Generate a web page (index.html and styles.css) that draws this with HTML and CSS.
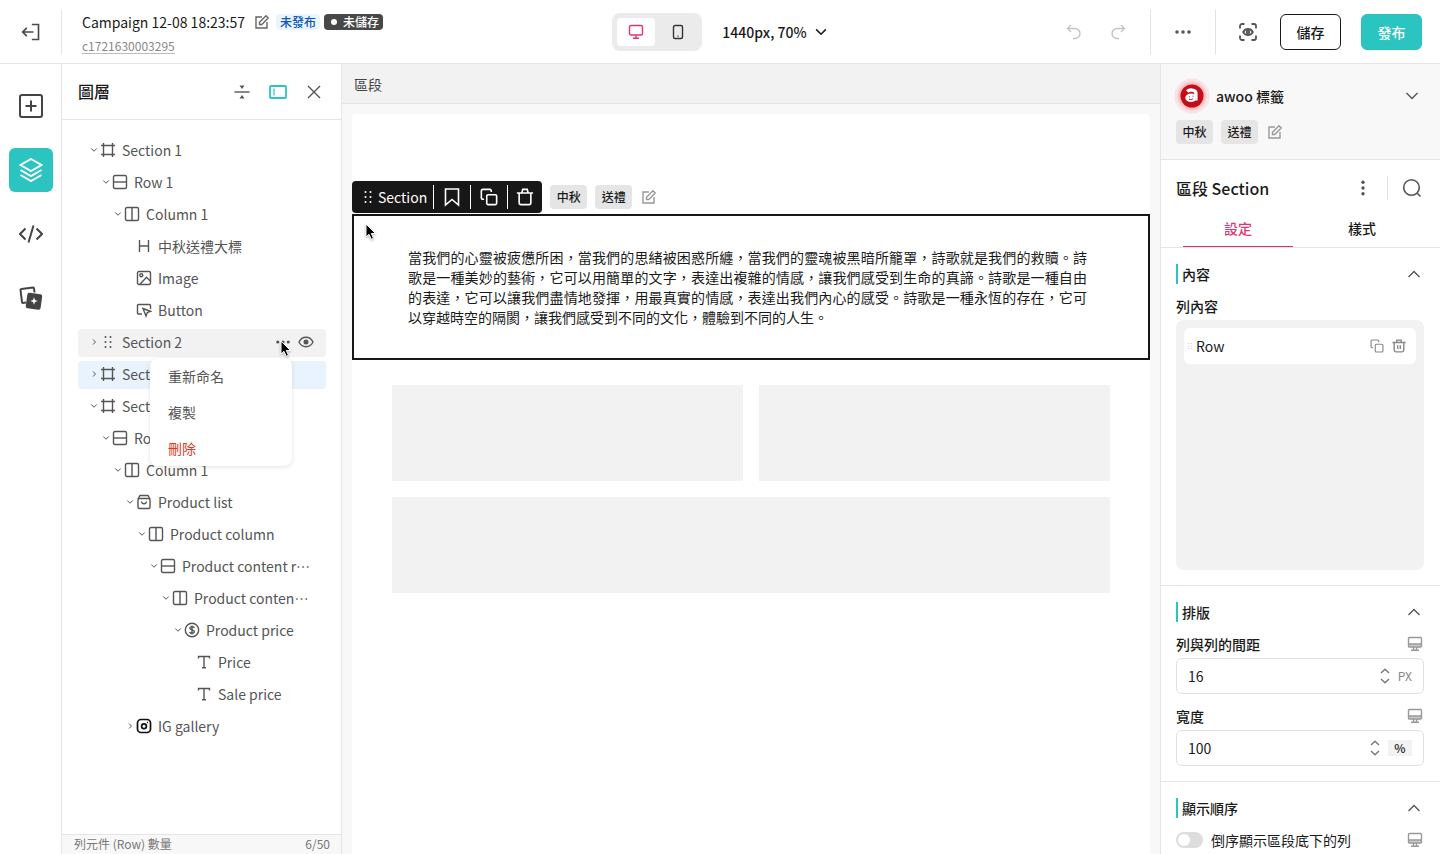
FILE: index.html
```html
<!DOCTYPE html>
<html lang="zh-Hant">
<head>
    <meta charset="UTF-8">
    <meta name="viewport" content="width=device-width, initial-scale=1.0">
    <title>Campaign 12-08 18:23:57</title>
    <link rel="stylesheet" href="styles.css">
</head>
<body>

    <!-- Icon set -->
    <svg class="sprite" aria-hidden="true">
        <symbol id="i-exit" viewBox="0 0 24 24"><path d="M13 3h8v18h-8M2 12h13M7 7l-5 5 5 5"/></symbol>
        <symbol id="i-edit" viewBox="0 0 16 16"><path d="M8 3H2v11h11V8M5.500 10.500V8.200L12 1.800l2.200 2.200-6.400 6.500z"/></symbol>
        <symbol id="i-desktop" viewBox="0 0 16 16"><rect x="1.500" y="1.500" width="13" height="9.500" rx="1.500"/><path d="M8 11v3M5 14.300h6"/></symbol>
        <symbol id="i-phone" viewBox="0 0 16 16"><rect x="3.500" y="1.500" width="9" height="13" rx="1.500"/><path d="M8 11.500v1"/></symbol>
        <symbol id="i-down" viewBox="0 0 16 16"><path d="M2.500 5l5.500 5.500L13.500 5"/></symbol>
        <symbol id="i-up" viewBox="0 0 16 16"><path d="M2.500 11L8 5.500l5.500 5.500"/></symbol>
        <symbol id="i-right" viewBox="0 0 16 16"><path d="M6 3l5 5-5 5"/></symbol>
        <symbol id="i-undo" viewBox="0 0 16 16"><path d="M5 1L1.500 4.500 5 8M1.500 4.500H9a5 5 0 0 1 0 10H7"/></symbol>
        <symbol id="i-redo" viewBox="0 0 16 16"><path d="M11 1l3.500 3.500L11 8M14.500 4.500H7a5 5 0 0 0 0 10h2"/></symbol>
        <symbol id="i-more" viewBox="0 0 16 16"><g fill="currentColor" stroke="none"><circle cx="2" cy="8" r="1.800"/><circle cx="8" cy="8" r="1.800"/><circle cx="14" cy="8" r="1.800"/></g></symbol>
        <symbol id="i-more-v" viewBox="0 0 16 16"><g fill="currentColor" stroke="none"><circle cx="8" cy="2.200" r="1.700"/><circle cx="8" cy="8" r="1.700"/><circle cx="8" cy="13.800" r="1.700"/></g></symbol>
        <symbol id="i-preview" viewBox="0 0 18 18"><path d="M1 5.500V3a2 2 0 0 1 2-2h2.500M12.500 1H15a2 2 0 0 1 2 2v2.500M17 12.500V15a2 2 0 0 1-2 2h-2.500M5.500 17H3a2 2 0 0 1-2-2v-2.500"/><path d="M4.200 9c2-4 7.600-4 9.600 0-2 4-7.600 4-9.600 0z"/><circle cx="9" cy="9" r="1.300"/></symbol>
        <symbol id="i-add" viewBox="0 0 24 24"><rect x="1" y="1" width="22" height="22" rx="2"/><path d="M12 6.500v11M6.500 12h11"/></symbol>
        <symbol id="i-layers" viewBox="0 0 24 24"><path d="M12 1l10.500 6L12 13 1.500 7zM1.500 12L12 18l10.500-6M1.500 17L12 23l10.500-6"/></symbol>
        <symbol id="i-code" viewBox="0 0 24 24"><path d="M6.500 6.500L1 12l5.500 5.500M17.500 6.500L23 12l-5.500 5.500M14.500 3.500l-5 17"/></symbol>
        <symbol id="i-cards" viewBox="0 0 24 24"><path d="M7 16.500l-3 .5a1 1 0 0 1-1-1L1.500 4a1 1 0 0 1 1-1L14 1.500a1 1 0 0 1 1 1l.5 4"/><rect x="7.500" y="7.500" width="15" height="15.500" rx="2" fill="currentColor" stroke="none" transform="rotate(8 15 15)"/><path d="M15 11.300l1 2.700 2.700 1-2.700 1-1 2.700-1-2.700-2.700-1 2.700-1z" fill="#fff" stroke="none"/></symbol>
        <symbol id="i-collapse" viewBox="0 0 16 16"><path d="M.5 8h15"/><path d="M5.500 1.500h5L8 5zM5.500 14.500h5L8 11z" fill="currentColor" stroke="none"/></symbol>
        <symbol id="i-dock" viewBox="0 0 18 16"><rect x="1" y="2" width="16" height="12" rx="1"/><path d="M5 4.500v7" stroke-width="1.200"/></symbol>
        <symbol id="i-close" viewBox="0 0 16 16"><path d="M2 2l12 12M14 2L2 14"/></symbol>
        <symbol id="i-section" viewBox="0 0 16 16"><path d="M3.500 1v14M12.500 1v14M1 3.500h14M1 12.500h14"/></symbol>
        <symbol id="i-row" viewBox="0 0 16 16"><rect x="1.500" y="1.500" width="13" height="13" rx="1.500"/><path d="M1.500 8h13"/></symbol>
        <symbol id="i-column" viewBox="0 0 16 16"><rect x="1.500" y="1.500" width="13" height="13" rx="1.500"/><path d="M8 1.500v13"/></symbol>
        <symbol id="i-heading" viewBox="0 0 16 16"><path d="M3.500 2v12M12.500 2v12M3.500 8h9"/></symbol>
        <symbol id="i-image" viewBox="0 0 16 16"><rect x="1.500" y="1.500" width="13" height="13" rx="1.500"/><circle cx="5.300" cy="5.300" r="1.500"/><path d="M4 14.300l6.500-7 4 4"/></symbol>
        <symbol id="i-button" viewBox="0 0 16 16"><path d="M6 12H2.500a1 1 0 0 1-1-1V3.500a1 1 0 0 1 1-1h11a1 1 0 0 1 1 1V7"/><path d="M7 6.500l7.500 2.800-3.200 1.200L10 14z"/></symbol>
        <symbol id="i-grip" viewBox="0 0 16 16"><g fill="currentColor" stroke="none"><circle cx="5.500" cy="3" r="1"/><circle cx="10.500" cy="3" r="1"/><circle cx="5.500" cy="8" r="1"/><circle cx="10.500" cy="8" r="1"/><circle cx="5.500" cy="13" r="1"/><circle cx="10.500" cy="13" r="1"/></g></symbol>
        <symbol id="i-eye" viewBox="0 0 16 16"><path d="M1 8c3-6.300 11-6.300 14 0-3 6.300-11 6.300-14 0z"/><circle cx="8" cy="8" r="1.800" fill="currentColor"/></symbol>
        <symbol id="i-bag" viewBox="0 0 16 16"><rect x="2" y="4.500" width="12" height="10" rx="1.500"/><path d="M2 5l2-3.500h8L14 5M5.500 7.500c.5 3 4.500 3 5 0"/></symbol>
        <symbol id="i-price" viewBox="0 0 16 16"><circle cx="8" cy="8" r="6.700"/><path d="M10.400 5.800C9.500 4.300 5.800 4.400 5.800 6.300c0 2 4.600 1.300 4.600 3.400 0 2-3.900 2-4.800.4M8 3.500v9"/></symbol>
        <symbol id="i-text" viewBox="0 0 16 16"><path d="M2.500 4.500V2.500h11v2M8 2.500v11.200M6 13.700h4"/></symbol>
        <symbol id="i-gallery" viewBox="0 0 16 16"><rect x="1.500" y="1.500" width="13" height="13" rx="3.500"/><circle cx="8" cy="8.300" r="2.400"/><path d="M11 4.500h1"/></symbol>
        <symbol id="i-bookmark" viewBox="0 0 20 20"><path d="M3.500 2h13v16L10 12.500 3.500 18z"/></symbol>
        <symbol id="i-copy" viewBox="0 0 20 20"><rect x="7.500" y="7.500" width="11" height="11" rx="1.500"/><path d="M4.500 12.500H3A1.500 1.500 0 0 1 1.500 11V3A1.500 1.500 0 0 1 3 1.500h8A1.500 1.500 0 0 1 12.500 3v1.500"/></symbol>
        <symbol id="i-trash" viewBox="0 0 20 20"><path d="M1 5.500h18M3.500 5.500v11a2 2 0 0 0 2 2h9a2 2 0 0 0 2-2v-11M6.500 5.500l1-4h5l1 4"/></symbol>
        <symbol id="i-bin" viewBox="0 0 16 16"><path d="M.5 4h15M2.500 4v8.700a2 2 0 0 0 2 2h7a2 2 0 0 0 2-2V4M5.500 4V1.300h5V4M6.500 7v4.500M9.500 7v4.500"/></symbol>
        <symbol id="i-search" viewBox="0 0 20 20"><circle cx="9.500" cy="9.500" r="7.800"/><path d="M15 15l3.500 3.500"/></symbol>
        <symbol id="i-device" viewBox="0 0 16 16"><path d="M1.500 8h13v3h-13z" fill="#ccc" stroke="none"/><rect x="1.500" y="1.500" width="13" height="9.500" rx="1"/><path d="M1.500 8h13M6.500 11v3M9.500 11v3M4 14.200h8"/></symbol>
        <symbol id="i-stepper" viewBox="0 0 10 16"><path d="M1 5l4-3.800L9 5M1 11l4 3.800L9 11"/></symbol>
        <symbol id="i-cursor" viewBox="0 0 14 18"><path d="M2 1v13l3-2.700 2.200 5 2.300-1-2.200-4.800h4.200z" fill="#000" stroke="#fff" stroke-width="1"/></symbol>
    </svg>

    <header class="topbar">
        <div class="topbar-left">
            <button class="exit" aria-label="離開"><svg class="icon icon-24"><use href="#i-exit"/></svg></button>
            <div class="campaign">
                <div class="campaign-name">
                    <h1>Campaign 12-08 18:23:57</h1>
                    <button class="edit-btn" aria-label="編輯名稱"><svg class="icon"><use href="#i-edit"/></svg></button>
                    <span class="status status-draft">未發布</span>
                    <span class="status status-unsaved">未儲存</span>
                </div>
                <a class="campaign-id" href="#">c1721630003295</a>
            </div>
        </div>

        <div class="viewport">
            <div class="device-toggle">
                <button class="active" aria-label="桌機"><svg class="icon"><use href="#i-desktop"/></svg></button>
                <button aria-label="手機"><svg class="icon"><use href="#i-phone"/></svg></button>
            </div>
            <button class="zoom">1440px, 70%<svg class="icon icon-14"><use href="#i-down"/></svg></button>
        </div>

        <div class="topbar-actions">
            <button class="icon-btn disabled" aria-label="復原"><svg class="icon"><use href="#i-undo"/></svg></button>
            <button class="icon-btn disabled" aria-label="重做"><svg class="icon"><use href="#i-redo"/></svg></button>
            <span class="divider"></span>
            <button class="icon-btn" aria-label="更多"><svg class="icon"><use href="#i-more"/></svg></button>
            <span class="divider"></span>
            <button class="icon-btn" aria-label="預覽"><svg class="icon icon-18"><use href="#i-preview"/></svg></button>
            <button class="btn">儲存</button>
            <button class="btn btn-primary">發布</button>
        </div>
    </header>

    <main class="editor">
        <nav class="rail">
            <button aria-label="新增"><svg class="icon icon-24"><use href="#i-add"/></svg></button>
            <button class="active" aria-label="圖層"><svg class="icon icon-24"><use href="#i-layers"/></svg></button>
            <button aria-label="程式碼"><svg class="icon icon-24"><use href="#i-code"/></svg></button>
            <button aria-label="範本"><svg class="icon icon-24"><use href="#i-cards"/></svg></button>
        </nav>

        <aside class="layers">
            <div class="layers-head">
                <h2>圖層</h2>
                <button aria-label="全部收合"><svg class="icon"><use href="#i-collapse"/></svg></button>
                <button class="teal" aria-label="固定面板"><svg class="icon icon-18"><use href="#i-dock"/></svg></button>
                <button aria-label="關閉"><svg class="icon"><use href="#i-close"/></svg></button>
            </div>

            <ul class="tree">
                <li>
                    <div class="node"><svg class="icon caret"><use href="#i-down"/></svg><svg class="icon"><use href="#i-section"/></svg><span>Section 1</span></div>
                    <ul>
                        <li>
                            <div class="node"><svg class="icon caret"><use href="#i-down"/></svg><svg class="icon"><use href="#i-row"/></svg><span>Row 1</span></div>
                            <ul>
                                <li>
                                    <div class="node"><svg class="icon caret"><use href="#i-down"/></svg><svg class="icon"><use href="#i-column"/></svg><span>Column 1</span></div>
                                    <ul>
                                        <li><div class="node leaf"><svg class="icon"><use href="#i-heading"/></svg><span>中秋送禮大標</span></div></li>
                                        <li><div class="node leaf"><svg class="icon"><use href="#i-image"/></svg><span>Image</span></div></li>
                                        <li><div class="node leaf"><svg class="icon"><use href="#i-button"/></svg><span>Button</span></div></li>
                                    </ul>
                                </li>
                            </ul>
                        </li>
                    </ul>
                </li>
                <li class="has-menu">
                    <div class="node hover">
                        <svg class="icon caret"><use href="#i-right"/></svg><svg class="icon icon-grip"><use href="#i-grip"/></svg><span>Section 2</span>
                        <button aria-label="更多"><svg class="icon icon-14"><use href="#i-more"/></svg></button>
                        <button aria-label="顯示"><svg class="icon"><use href="#i-eye"/></svg></button>
                    </div>
                    <div class="menu">
                        <button>重新命名</button>
                        <button>複製</button>
                        <button class="danger">刪除</button>
                    </div>
                    <svg class="icon cursor"><use href="#i-cursor"/></svg>
                </li>
                <li><div class="node selected"><svg class="icon caret"><use href="#i-right"/></svg><svg class="icon"><use href="#i-section"/></svg><span>Section 3</span></div></li>
                <li>
                    <div class="node"><svg class="icon caret"><use href="#i-down"/></svg><svg class="icon"><use href="#i-section"/></svg><span>Section 4</span></div>
                    <ul>
                        <li>
                            <div class="node"><svg class="icon caret"><use href="#i-down"/></svg><svg class="icon"><use href="#i-row"/></svg><span>Row 1</span></div>
                            <ul>
                                <li>
                                    <div class="node"><svg class="icon caret"><use href="#i-down"/></svg><svg class="icon"><use href="#i-column"/></svg><span>Column 1</span></div>
                                    <ul>
                                        <li>
                                            <div class="node"><svg class="icon caret"><use href="#i-down"/></svg><svg class="icon"><use href="#i-bag"/></svg><span>Product list</span></div>
                                            <ul>
                                                <li>
                                                    <div class="node"><svg class="icon caret"><use href="#i-down"/></svg><svg class="icon"><use href="#i-column"/></svg><span>Product column</span></div>
                                                    <ul>
                                                        <li>
                                                            <div class="node"><svg class="icon caret"><use href="#i-down"/></svg><svg class="icon"><use href="#i-row"/></svg><span>Product content row</span></div>
                                                            <ul>
                                                                <li>
                                                                    <div class="node"><svg class="icon caret"><use href="#i-down"/></svg><svg class="icon"><use href="#i-column"/></svg><span>Product content column</span></div>
                                                                    <ul>
                                                                        <li>
                                                                            <div class="node"><svg class="icon caret"><use href="#i-down"/></svg><svg class="icon"><use href="#i-price"/></svg><span>Product price</span></div>
                                                                            <ul>
                                                                                <li><div class="node leaf"><svg class="icon"><use href="#i-text"/></svg><span>Price</span></div></li>
                                                                                <li><div class="node leaf"><svg class="icon"><use href="#i-text"/></svg><span>Sale price</span></div></li>
                                                                            </ul>
                                                                        </li>
                                                                    </ul>
                                                                </li>
                                                            </ul>
                                                        </li>
                                                    </ul>
                                                </li>
                                            </ul>
                                        </li>
                                        <li><div class="node"><svg class="icon caret"><use href="#i-right"/></svg><svg class="icon icon-dark"><use href="#i-gallery"/></svg><span>IG gallery</span></div></li>
                                    </ul>
                                </li>
                            </ul>
                        </li>
                    </ul>
                </li>
            </ul>

            <div class="layers-foot"><span>列元件 (Row) 數量</span><span>6/50</span></div>
        </aside>

        <section class="canvas">
            <div class="breadcrumb">區段</div>
            <div class="stage">
                <div class="block-bar">
                    <div class="block-tools">
                        <svg class="icon icon-grip"><use href="#i-grip"/></svg>
                        <span>Section</span>
                        <button aria-label="收藏"><svg class="icon icon-20"><use href="#i-bookmark"/></svg></button>
                        <button aria-label="複製"><svg class="icon icon-18"><use href="#i-copy"/></svg></button>
                        <button aria-label="刪除"><svg class="icon icon-18"><use href="#i-trash"/></svg></button>
                    </div>
                    <div class="tags">
                        <span class="tag">中秋</span>
                        <span class="tag">送禮</span>
                        <button class="edit-btn" aria-label="編輯標籤"><svg class="icon"><use href="#i-edit"/></svg></button>
                    </div>
                </div>
                <div class="block-selected">
                    <p>當我們的心靈被疲憊所困，當我們的思緒被困惑所纏，當我們的靈魂被黑暗所籠罩，詩歌就是我們的救贖。詩歌是一種美妙的藝術，它可以用簡單的文字，表達出複雜的情感，讓我們感受到生命的真諦。詩歌是一種自由的表達，它可以讓我們盡情地發揮，用最真實的情感，表達出我們內心的感受。詩歌是一種永恆的存在，它可以穿越時空的隔閡，讓我們感受到不同的文化，體驗到不同的人生。</p>
                    <svg class="icon cursor"><use href="#i-cursor"/></svg>
                </div>
                <div class="placeholder-grid">
                    <div></div>
                    <div></div>
                    <div class="wide"></div>
                </div>
            </div>
        </section>

        <aside class="settings">
            <div class="awoo">
                <div class="awoo-head">
                    <svg class="awoo-logo" viewBox="0 0 36 36">
                        <defs>
                            <radialGradient id="glow">
                                <stop offset="0.6" stop-color="#f4a3aa"/>
                                <stop offset="1" stop-color="#fdf3f4"/>
                            </radialGradient>
                        </defs>
                        <circle cx="18" cy="18" r="17" fill="url(#glow)" stroke="#f5dfe1"/>
                        <circle cx="18" cy="18" r="11.500" fill="#c50d18"/>
                        <path d="M13.200 13.500c2-2 8.200-2.200 8.700 1.500v7.500" fill="none" stroke="#fff" stroke-width="3.400"/>
                        <ellipse cx="17" cy="19.800" rx="5.700" ry="4.300" fill="#fff"/>
                        <path d="M14.800 18.800h1M18.500 18.200h1M15 21c1.500 1 3 .8 4-.5" fill="none" stroke="#c50d18" stroke-width="1"/>
                    </svg>
                    <strong>awoo 標籤</strong>
                    <button aria-label="展開"><svg class="icon"><use href="#i-down"/></svg></button>
                </div>
                <div class="tags">
                    <span class="tag">中秋</span>
                    <span class="tag">送禮</span>
                    <button class="edit-btn" aria-label="編輯標籤"><svg class="icon"><use href="#i-edit"/></svg></button>
                </div>
            </div>

            <div class="settings-head">
                <h2>區段 Section</h2>
                <button aria-label="更多"><svg class="icon"><use href="#i-more-v"/></svg></button>
                <span class="divider"></span>
                <button aria-label="搜尋"><svg class="icon icon-20"><use href="#i-search"/></svg></button>
            </div>
            <div class="tabs">
                <button class="active">設定</button>
                <button>樣式</button>
            </div>

            <section class="group">
                <div class="group-title"><h3>內容</h3><button aria-label="收合"><svg class="icon"><use href="#i-up"/></svg></button></div>
                <h4>列內容</h4>
                <div class="row-list">
                    <div class="row-item">
                        <svg class="icon row-grip"><use href="#i-grip"/></svg>
                        <span>Row</span>
                        <button aria-label="複製"><svg class="icon icon-14"><use href="#i-copy"/></svg></button>
                        <button aria-label="刪除"><svg class="icon icon-14"><use href="#i-bin"/></svg></button>
                    </div>
                </div>
            </section>

            <section class="group">
                <div class="group-title"><h3>排版</h3><button aria-label="收合"><svg class="icon"><use href="#i-up"/></svg></button></div>
                <div class="field">
                    <div class="field-label"><label for="gap">列與列的間距</label><svg class="icon"><use href="#i-device"/></svg></div>
                    <div class="number">
                        <input type="number" id="gap" value="16">
                        <svg class="icon stepper"><use href="#i-stepper"/></svg>
                        <span class="unit">PX</span>
                    </div>
                </div>
                <div class="field">
                    <div class="field-label"><label for="width">寬度</label><svg class="icon"><use href="#i-device"/></svg></div>
                    <div class="number">
                        <input type="number" id="width" value="100">
                        <svg class="icon stepper"><use href="#i-stepper"/></svg>
                        <button class="unit-btn">%</button>
                    </div>
                </div>
            </section>

            <section class="group">
                <div class="group-title"><h3>顯示順序</h3><button aria-label="收合"><svg class="icon"><use href="#i-up"/></svg></button></div>
                <div class="switch-row">
                    <input type="checkbox" class="switch" id="reverse">
                    <label for="reverse">倒序顯示區段底下的列</label>
                    <svg class="icon"><use href="#i-device"/></svg>
                </div>
            </section>
        </aside>
    </main>

</body>
</html>
```
FILE: styles.css
```css
* {
    box-sizing: border-box;
}

body {
    margin: 0;
    height: 100vh;
    display: flex;
    flex-direction: column;
    overflow: hidden;
    background: #fff;
    color: #1a1a1a;
    font-family: "Noto Sans CJK TC", "Noto Sans", sans-serif;
    font-size: 14px;
    line-height: 20px;
}

h1, h2, h3, h4, p, ul {
    margin: 0;
    padding: 0;
}

h1, h4 {
    font-size: 14px;
    font-weight: 400;
}

h2 {
    font-size: 16px;
    font-weight: 500;
    line-height: 24px;
}

h3 {
    font-size: 14px;
    font-weight: 500;
}

ul {
    list-style: none;
}

button {
    display: flex;
    align-items: center;
    justify-content: center;
    margin: 0;
    padding: 0;
    border: 0;
    background: none;
    color: inherit;
    font: inherit;
    cursor: pointer;
}

/* Icons */
.sprite {
    position: absolute;
    width: 0;
    height: 0;
}

.icon {
    display: block;
    flex: none;
    width: 16px;
    height: 16px;
    fill: none;
    stroke: currentColor;
    stroke-width: 1.4;
}

.icon-14 {
    width: 14px;
    height: 14px;
    stroke-width: 1.6;
}

.icon-18 {
    width: 18px;
    height: 18px;
    stroke-width: 1.8;
}

.icon-20 {
    width: 20px;
    height: 20px;
    stroke-width: 1.6;
}

.icon-24 {
    width: 24px;
    height: 24px;
    stroke-width: 2;
}

.icon-dark {
    color: #111;
    stroke-width: 1.7;
}

.cursor {
    position: absolute;
    width: 14px;
    height: 18px;
    filter: drop-shadow(0 1px 1px rgba(0, 0, 0, 0.3));
}

.divider {
    width: 1px;
    height: 24px;
    background: #e2e2e2;
}

/* Top bar */
.topbar {
    display: grid;
    grid-template-columns: 1fr auto 1fr;
    align-items: center;
    flex: none;
    height: 64px;
    border-bottom: 1px solid #e5e5e5;
}

.topbar-left {
    display: flex;
    align-items: center;
    gap: 20px;
}

.exit {
    width: 62px;
    height: 44px;
    border-right: 1px solid #e5e5e5;
    color: #4a4a4a;
}

.exit .icon {
    width: 20px;
    height: 20px;
}

.campaign-name {
    display: flex;
    align-items: center;
    height: 24px;
    margin-bottom: 2px;
    white-space: nowrap;
}

.edit-btn {
    margin: 0 6px 0 9px;
    color: #999;
}

.campaign .edit-btn {
    color: #666;
}

.campaign-id {
    display: block;
    width: fit-content;
    height: 18px;
    border-bottom: 1px solid #bbb;
    color: #888;
    font-size: 12px;
    line-height: 20px;
    text-decoration: none;
}

.status {
    padding: 0 4px;
    border-radius: 4px;
    font-size: 12px;
    font-weight: 500;
    line-height: 16px;
}

.status-draft {
    background: #ebf4ff;
    color: #0958b3;
}

.status-unsaved {
    display: flex;
    align-items: center;
    gap: 6px;
    margin-left: 4px;
    padding-left: 7px;
    background: #484848;
    color: #fff;
}

.status-unsaved::before {
    content: "";
    width: 6px;
    height: 6px;
    border-radius: 50%;
    background: #fff;
}

.viewport {
    display: flex;
    align-items: center;
    gap: 20px;
}

.device-toggle {
    display: flex;
    gap: 4px;
    padding: 5px;
    border-radius: 8px;
    background: #ebebeb;
}

.device-toggle button {
    width: 38px;
    height: 28px;
    border-radius: 4px;
    color: #333;
}

.device-toggle .active {
    background: #fff;
    color: #e0356f;
}

.zoom {
    gap: 7px;
    font-weight: 500;
}

.zoom .icon {
    stroke-width: 1.8;
}

.topbar-actions {
    display: flex;
    align-items: center;
    justify-content: flex-end;
    gap: 20px;
    padding-right: 18px;
}

.topbar-actions .divider {
    height: 44px;
}

.icon-btn {
    width: 24px;
    height: 24px;
    color: #555;
}

.icon-btn.disabled {
    color: #c4c4c4;
}

.btn {
    width: 61px;
    height: 36px;
    border: 1px solid #1a1a1a;
    border-radius: 6px;
    font-weight: 500;
}

.btn-primary {
    border-color: #2bc4c1;
    background: #2bc4c1;
    color: #fff;
}

/* Editor columns */
.editor {
    display: flex;
    flex: 1;
    min-height: 0;
}

.rail {
    display: flex;
    flex-direction: column;
    align-items: center;
    gap: 20px;
    flex: none;
    width: 62px;
    padding-top: 20px;
    border-right: 1px solid #e5e5e5;
}

.rail button {
    width: 44px;
    height: 44px;
    border-radius: 6px;
    color: #444;
}

.rail .active {
    background: #2bc4c1;
    color: #fff;
}

/* Layers panel */
.layers {
    display: flex;
    flex-direction: column;
    flex: none;
    width: 280px;
    border-right: 1px solid #e5e5e5;
}

.layers-head {
    display: flex;
    align-items: center;
    gap: 12px;
    height: 56px;
    padding: 0 15px 0 16px;
    border-bottom: 1px solid #e5e5e5;
}

.layers-head h2 {
    flex: 1;
    padding-bottom: 2px;
}

.layers-head button {
    width: 24px;
    height: 24px;
    color: #555;
}

.layers-head .teal {
    color: #2bc4c1;
}

.tree {
    flex: 1;
    padding: 17px 15px 0 16px;
    color: #555;
}

.tree ul {
    padding-left: 12px;
}

.node {
    display: flex;
    align-items: center;
    height: 28px;
    margin-bottom: 4px;
    padding: 0 14px 2px 10px;
    border-radius: 4px;
}

.node span {
    flex: 1;
    margin-left: 6px;
    overflow: hidden;
    text-overflow: ellipsis;
    white-space: nowrap;
}

.node.leaf {
    padding-left: 22px;
}

.node.hover {
    padding-right: 12px;
    background: #f2f2f2;
}

.node.selected {
    background: #e8f3fe;
}

.node button {
    margin-left: 8px;
}

.caret {
    width: 8px;
    height: 8px;
    margin: 0 2px;
    stroke-width: 2;
}

.has-menu {
    position: relative;
}

.has-menu .cursor {
    top: 11px;
    left: 201px;
    z-index: 3;
}

.menu {
    position: absolute;
    top: 29px;
    left: 72px;
    z-index: 2;
    width: 142px;
    border-radius: 8px;
    background: #fff;
    box-shadow: 0 1px 4px rgba(0, 0, 0, 0.12);
}

.menu button {
    justify-content: flex-start;
    width: 100%;
    height: 36px;
    padding: 0 18px;
}

.menu .danger {
    color: #dc3a26;
}

.layers-foot {
    display: flex;
    justify-content: space-between;
    padding: 0 11px 2px 12px;
    border-top: 1px solid #e5e5e5;
    background: #f8f8f8;
    color: #777;
    font-size: 12px;
    line-height: 17px;
}

/* Canvas */
.canvas {
    display: flex;
    flex-direction: column;
    flex: 1;
    min-width: 0;
    background: #f8f8f8;
}

.breadcrumb {
    height: 40px;
    padding: 0 12px;
    border-bottom: 1px solid #e5e5e5;
    background: #f2f2f2;
    color: #444;
    line-height: 40px;
}

.stage {
    flex: 1;
    margin: 10px 10px 0;
    padding-top: 67px;
    border-radius: 4px 4px 0 0;
    background: #fff;
}

.block-bar {
    display: flex;
    align-items: center;
    gap: 8px;
    margin-bottom: 1px;
}

.block-tools {
    display: flex;
    align-items: center;
    height: 32px;
    padding-left: 8px;
    border-radius: 4px;
    background: #171717;
    color: #fff;
}

.block-tools span {
    margin: 0 6px 0 2px;
}

.block-tools button {
    width: 37px;
    height: 24px;
    border-left: 1px solid #fff;
}

.block-tools button:last-child {
    width: 35px;
}

.tags {
    display: flex;
    align-items: center;
    gap: 8px;
}

.tag {
    min-width: 37px;
    border-radius: 4px;
    background: #e5e5e5;
    font-size: 12px;
    font-weight: 500;
    line-height: 24px;
    text-align: center;
}

.tags .edit-btn {
    margin: 0 0 0 1px;
}

.block-selected {
    position: relative;
    padding: 31px 61px 31px 54px;
    border: 2px solid #171717;
}

.block-selected p {
    text-align: justify;
}

.block-selected .cursor {
    top: 7px;
    left: 10px;
}

.placeholder-grid {
    display: grid;
    grid-template-columns: 1fr 1fr;
    gap: 16px;
    padding: 25px 40px;
}

.placeholder-grid div {
    height: 96px;
    background: #f2f2f2;
}

.placeholder-grid .wide {
    grid-column: 1 / 3;
}

/* Settings panel */
.settings {
    flex: none;
    width: 280px;
    overflow: hidden;
    border-left: 1px solid #e5e5e5;
}

.awoo {
    height: 96px;
    padding: 14px 20px 0 15px;
    border-bottom: 1px solid #e5e5e5;
    background: #f8f8f8;
}

.awoo-head {
    display: flex;
    align-items: center;
    height: 36px;
    margin-bottom: 6px;
}

.awoo-logo {
    width: 36px;
    height: 36px;
    margin: 0 6px 0 -2px;
}

.awoo-head strong {
    flex: 1;
    font-weight: 500;
}

.settings-head {
    display: flex;
    align-items: center;
    gap: 12px;
    height: 56px;
    padding: 0 16px 0 15px;
}

.settings-head h2 {
    flex: 1;
}

.settings-head button {
    width: 24px;
    height: 24px;
    color: #555;
}

.tabs {
    display: flex;
    height: 32px;
    padding: 0 16px 0 15px;
    border-bottom: 1px solid #e5e5e5;
}

.tabs button {
    flex: 1;
    margin: 0 7px;
    padding-bottom: 6px;
    border-bottom: 1px solid transparent;
    font-weight: 500;
}

.tabs .active {
    border-color: #d9306b;
    color: #e0356f;
}

.group {
    padding: 16px 16px 15px 15px;
    border-bottom: 1px solid #e5e5e5;
}

.group-title {
    display: flex;
    align-items: center;
    justify-content: space-between;
    margin-bottom: 12px;
    padding-right: 2px;
}

.group-title h3 {
    padding-left: 4px;
    border-left: 2px solid #2bc4c1;
}

.group-title button,
.awoo-head button {
    color: #555;
}

.group h4,
.group label {
    font-weight: 500;
}

.row-list {
    height: 250px;
    margin-top: 4px;
    padding: 8px;
    border-radius: 8px;
    background: #f2f2f2;
}

.row-item {
    display: flex;
    align-items: center;
    gap: 8px;
    height: 36px;
    padding: 0 10px 0 2px;
    border-radius: 6px;
    background: #fff;
}

.row-item span {
    flex: 1;
    margin-left: -6px;
}

.row-item button {
    color: #888;
}

.row-item .row-grip {
    width: 8px;
    height: 8px;
    color: #bbb;
}

.field + .field {
    margin-top: 12px;
}

.field-label {
    display: flex;
    align-items: center;
    justify-content: space-between;
    margin-bottom: 4px;
    padding-right: 1px;
}

.field-label .icon,
.switch-row .icon {
    color: #999;
}

.number {
    display: flex;
    align-items: center;
    gap: 8px;
    height: 36px;
    padding: 0 11px;
    border: 1px solid #e0e0e0;
    border-radius: 6px;
}

.number input {
    flex: 1;
    min-width: 0;
    padding: 0;
    border: 0;
    outline: 0;
    background: none;
    color: #1a1a1a;
    font: inherit;
    appearance: textfield;
}

.number input::-webkit-inner-spin-button {
    appearance: none;
}

.stepper {
    width: 10px;
    color: #777;
}

.unit {
    color: #888;
    font-size: 12px;
}

.unit-btn {
    width: 24px;
    height: 16px;
    background: #f2f2f2;
    font-size: 12px;
    font-weight: 500;
}

.switch-row {
    display: flex;
    align-items: center;
    padding-right: 1px;
}

.switch-row label {
    flex: 1;
    margin-left: 8px;
    font-weight: 400;
}

.switch {
    appearance: none;
    display: flex;
    width: 27px;
    height: 16px;
    margin: 0;
    padding: 2px;
    border-radius: 8px;
    background: #ddd;
}

.switch::before {
    content: "";
    width: 12px;
    height: 12px;
    border-radius: 50%;
    background: #fff;
}
```
